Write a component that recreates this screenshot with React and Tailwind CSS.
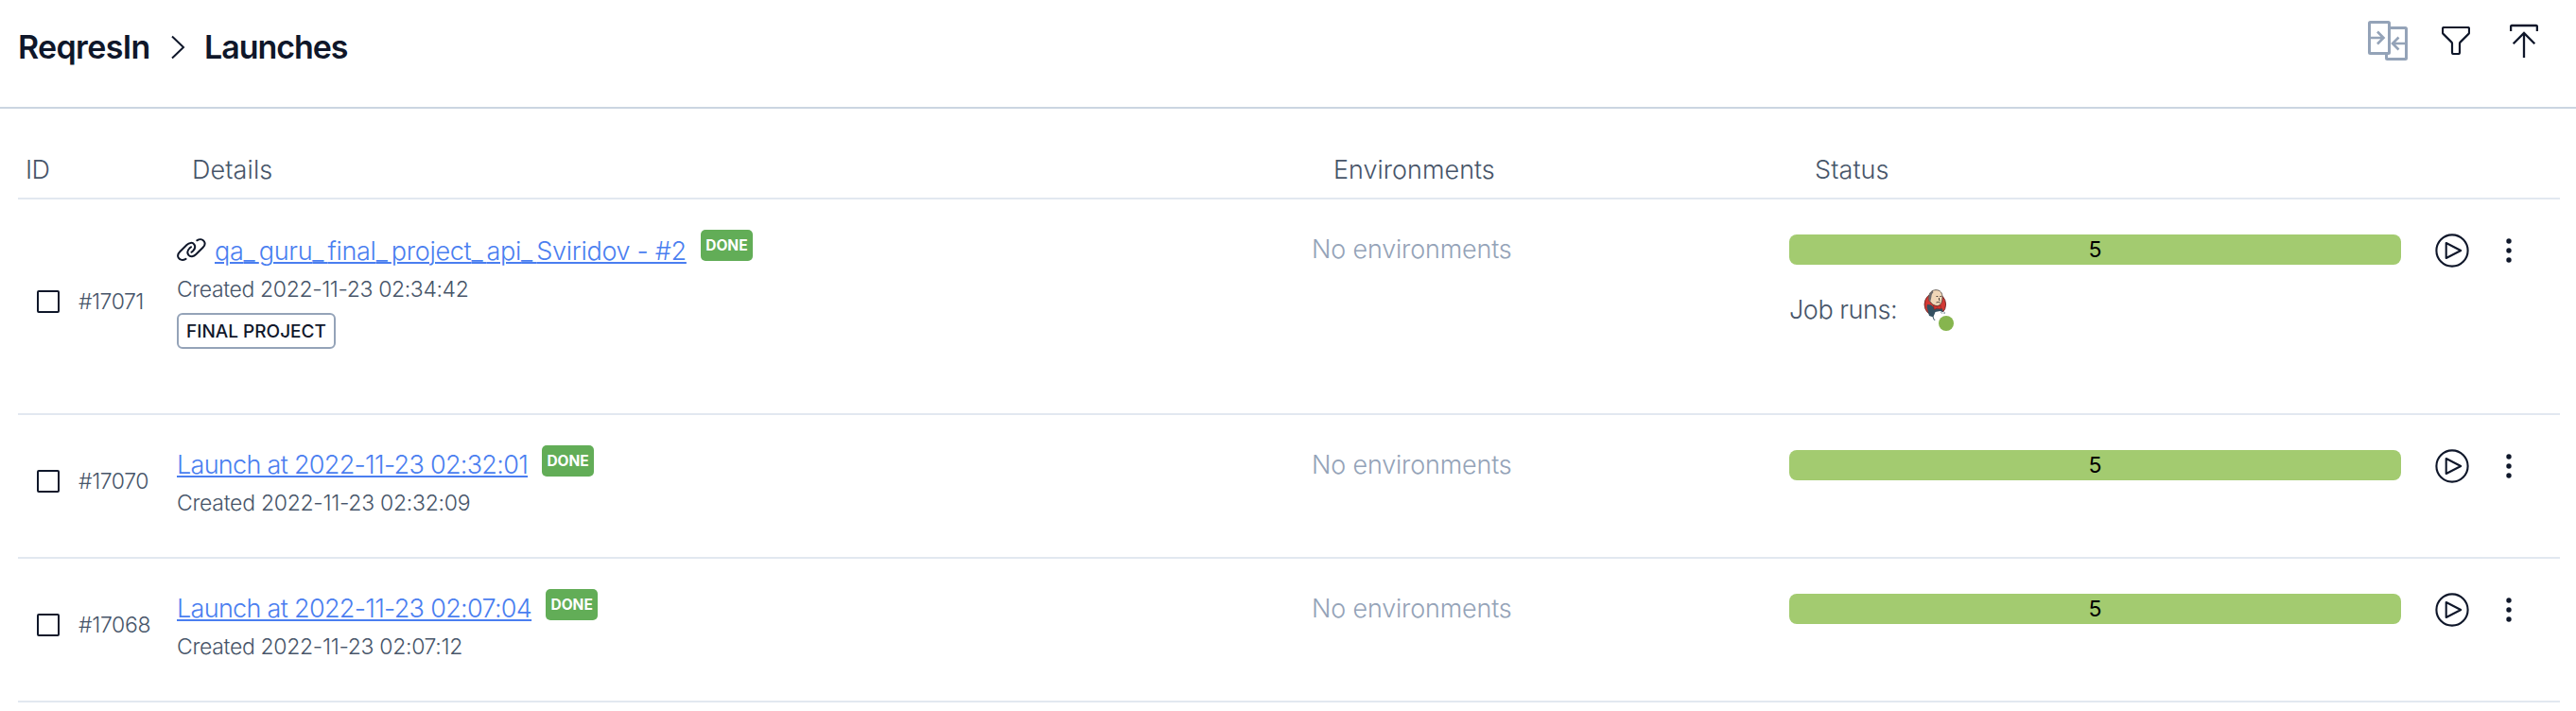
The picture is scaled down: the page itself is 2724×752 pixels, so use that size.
import React from "react";

const launches = [
  {
    id: "#17071",
    idClass: "tracking-[-0.5px]",
    title: "qa_guru_final_project_api_Sviridov - #2",
    titleClass: "tracking-[-0.3px]",
    created: "Created 2022-11-23 02:34:42",
    createdClass: "tracking-[-0.38px]",
    linked: true,
    tag: "FINAL PROJECT",
    jobRuns: true,
    height: "h-[228px]",
    titlePad: "pt-[39px]",
    createdPad: "mt-[10px]",
  },
  {
    id: "#17070",
    idClass: "tracking-[-0.42px]",
    title: "Launch at 2022-11-23 02:32:01",
    titleClass: "tracking-[-0.7px]",
    created: "Created 2022-11-23 02:32:09",
    createdClass: "tracking-[-0.28px]",
    height: "h-[152px]",
    titlePad: "pt-[37px]",
    createdPad: "mt-[10px]",
  },
  {
    id: "#17068",
    idClass: "tracking-[-0.35px]",
    title: "Launch at 2022-11-23 02:07:04",
    titleClass: "tracking-[-0.69px]",
    created: "Created 2022-11-23 02:07:12",
    createdClass: "tracking-[-0.32px]",
    height: "h-[152px]",
    titlePad: "pt-[37px]",
    createdPad: "mt-[10px]",
  },
];

function CompareIcon() {
  return (
    <svg width="42" height="42" viewBox="0 0 42 42" fill="none" stroke="#94a3b8" strokeWidth="3">
      <rect x="1.5" y="1.5" width="21" height="33" rx="1" />
      <path d="M24 7.5H39.5a1 1 0 0 1 1 1V39.5a1 1 0 0 1-1 1H20.500a1 1 0 0 1-1-1V36" />
      <path d="M3 18H17M10 11.500L16.500 18L10 24.500M39 24H26M32.500 17.500L26 24L32.500 30.500" strokeWidth="2.600" />
    </svg>
  );
}

function FilterIcon() {
  return (
    <svg width="30" height="30" viewBox="0 0 30 30" fill="none" stroke="#0f172a" strokeWidth="2.200" strokeLinejoin="round">
      <path d="M2.500 1H27.500Q29 1 29 2.500V6.500Q29 7.300 28.400 7.900L19.600 16.600Q19 17.200 19 18V27.500Q19 29 17.500 29H12.500Q11 29 11 27.500V18Q11 17.200 10.400 16.600L1.600 7.900Q1 7.300 1 6.500V2.500Q1 1 2.500 1Z" />
    </svg>
  );
}

function UploadIcon() {
  return (
    <svg width="30" height="36" viewBox="0 0 30 36" fill="none" stroke="#0f172a" strokeWidth="2.300">
      <path d="M1.100 8V3Q1.100 2 2.100 2H27.900Q28.900 2 28.900 3V8M15 36V10M3.700 21.300L15 10L26.300 21.300" />
    </svg>
  );
}

function LinkIcon() {
  return (
    <svg width="31" height="24" viewBox="0 0 31 24" fill="none" stroke="#0f172a" strokeWidth="2" strokeLinecap="round" className="mt-[2px] shrink-0">
      <path d="M9.500 21.800C6.500 23.600 3.200 23.200 1.800 20.800C0.500 18.600 1.200 16.200 3.200 14.200L10.500 7C13 4.500 16.600 4 18.400 6.600C20 9 19.200 11.300 17 13.500L15.500 14.800" />
      <path d="M21.300 2.300C24 0.600 27.200 0.800 28.800 3.200C30.200 5.300 29.600 7.800 27.600 9.800L20.300 17C17.800 19.500 14.200 20 12.300 17.600C10.700 15.400 11.300 12.700 13.400 10.600L15 9.200" />
    </svg>
  );
}

function PlayIcon() {
  return (
    <svg width="36" height="36" viewBox="0 0 36 36" fill="none" stroke="#0f172a" strokeWidth="2.100" strokeLinejoin="round">
      <circle cx="18" cy="18" r="16.600" />
      <path d="M11.700 10V26L27.200 18Z" />
    </svg>
  );
}

function DotsIcon() {
  return (
    <svg width="6" height="26" viewBox="0 0 6 26" fill="#0f172a">
      <circle cx="3" cy="3" r="2.700" />
      <circle cx="3" cy="13" r="2.700" />
      <circle cx="3" cy="23" r="2.700" />
    </svg>
  );
}

function JenkinsIcon() {
  return (
    <svg width="25" height="33" viewBox="0 0 25 33">
      <ellipse cx="12.300" cy="16" rx="11.300" ry="12" fill="#d33833" stroke="#5b2020" strokeWidth="0.800" />
      <path d="M4 16L8 16.500L12 20L16 20.500L19.500 20L21 24L22 27L13.500 31.500L9 29L6 28L3.500 19Z" fill="#335061" />
      <path d="M5.800 10C5.200 3 9.500 0.800 13 0.700C18 0.600 20 4 20 8.500C20 13 18.500 17.500 14.500 17.500C11.500 17.500 8.500 15.500 7.600 13.500C6.300 13 5.500 11.500 5.800 10Z" fill="#f0d6b7" stroke="#4a4038" strokeWidth="0.800" />
      <path d="M5.800 11C5.200 6.500 6.500 3 10 1.700L10.300 3.500C8.300 5 8.600 7.500 8.100 9.500L7.300 13Z" fill="#6d6b6d" />
      <path d="M13.500 7.500H15.300M17.300 7.500H18.800M16.500 9V11.500L17.500 11.800M13.500 14Q15.500 13 17.500 14" stroke="#4a4038" strokeWidth="1" fill="none" />
      <path d="M10.500 16.800L14.200 18.200L18 16.800L18.600 21L14.600 20L11.300 21.500Z" fill="#d33833" stroke="#81241f" strokeWidth="0.600" />
      <path d="M12.500 24L17.500 23L22.500 25L25 25.500V33H12L10.500 29Z" fill="#ffffff" />
      <path d="M10.200 29.500L11.200 32.300H12.300M18.500 24.300L19.600 25.500M21.500 25.300L23 24.800" stroke="#335061" strokeWidth="0.900" fill="none" />
    </svg>
  );
}

/* Underscores get extra room and stay joined to the underline. */
function LinkTitle({ text }) {
  return text.split(/(_)/).map((part, i) =>
    part === "_" ? (
      <span key={i} className="tracking-[4.100px] [text-decoration-skip-ink:none]">_</span>
    ) : (
      part
    )
  );
}

function Launch({ item }) {
  return (
    <div className={`flex border-b-2 border-[#e2e8f0] ${item.height}`}>
      <div className="flex w-[168px] shrink-0 items-center pb-[10px] pl-[20px]">
        <span className="size-6 rounded-[2px] border-2 border-[#0f172a]" />
        <span className={`ml-[20px] text-[23px] leading-7 text-[#475569] ${item.idClass}`}>{item.id}</span>
      </div>
      <div className="w-[1200px] shrink-0">
        <div className="flex">
          <div className={item.titlePad}>
            <div className="flex h-8 gap-[9px]">
              {item.linked && <LinkIcon />}
              <a className={`text-[27px] leading-8 whitespace-nowrap text-[#4a7ef0] underline decoration-2 underline-offset-[2px] ${item.titleClass}`}>
                <LinkTitle text={item.title} />
              </a>
            </div>
          </div>
          <span className="mt-[32px] ml-[15px] flex h-[33px] w-[55px] items-center justify-center rounded-[5px] bg-[#62ad57] pt-px text-[15.500px] font-bold text-white">
            DONE
          </span>
        </div>
        <div className={`text-[23px] leading-7 text-[#475569] ${item.createdPad} ${item.createdClass}`}>{item.created}</div>
        {item.tag && (
          <span className="mt-[11px] flex h-[38px] w-[168px] items-center justify-center rounded-[6px] border-2 border-[#94a3b8] pt-[3px] text-[19px] font-medium text-[#0f172a]">
            {item.tag}
          </span>
        )}
      </div>
      <div className="w-[505px] shrink-0 pt-[37px] text-[27px] leading-8 tracking-[-0.2px] text-[#94a3b8]">No environments</div>
      <div className="w-[647px] shrink-0 pt-[37px]">
        <div className="flex h-8 items-center justify-center rounded-lg bg-[#a3cb70] pt-px text-[23px] font-normal text-black">5</div>
        {item.jobRuns && (
          <div className="mt-[26px] flex">
            <span className="mt-[6px] text-[27px] leading-8 tracking-[-0.45px] text-[#475569]">Job runs:</span>
            <span className="relative ml-[28px] h-[42px] w-[32px]">
              <JenkinsIcon />
              <span className="absolute right-0 bottom-[-2px] size-4 rounded-full bg-[#86b54e]" />
            </span>
          </div>
        )}
      </div>
      <div className="mt-[36px] ml-[36px] flex h-[36px] items-center gap-[39px]">
        <PlayIcon />
        <DotsIcon />
      </div>
    </div>
  );
}

export default function App() {
  return (
    <div className="h-[752px] w-full overflow-hidden bg-white font-['Inter',sans-serif] font-light">
      <header className="flex h-[115px] items-start justify-between border-b-2 border-[#cbd5e1] pr-[40px] pl-[19px]">
        <div className="flex items-center pt-[30px] text-[34px] leading-10 font-semibold text-[#0f172a]">
          <span className="w-[162px] tracking-[-0.65px]">ReqresIn</span>
          <svg width="15" height="26" viewBox="0 0 15 26" fill="none" stroke="#0f172a" strokeWidth="2" className="mr-[20px]">
            <path d="M1 1.500L13 13L1 24.500" />
          </svg>
          <span className="tracking-[-1.050px]">Launches</span>
        </div>
        <div className="flex items-start pt-[22px]">
          <CompareIcon />
          <div className="mt-[6px] ml-[36px]"><FilterIcon /></div>
          <div className="mt-[3px] ml-[42px]"><UploadIcon /></div>
        </div>
      </header>
      <main className="ml-[19px] w-[2688px]">
        <div className="flex h-[96px] border-b-2 border-[#e2e8f0] pt-[49px] text-[27px] leading-8 text-[#475569]">
          <div className="w-[184px] pl-[8px] tracking-[-0.5px]">ID</div>
          <div className="w-[1207px] tracking-[0.1px]">Details</div>
          <div className="w-[509px]">Environments</div>
          <div className="tracking-[0.1px]">Status</div>
        </div>
        {launches.map((item) => (
          <Launch key={item.id} item={item} />
        ))}
      </main>
    </div>
  );
}
